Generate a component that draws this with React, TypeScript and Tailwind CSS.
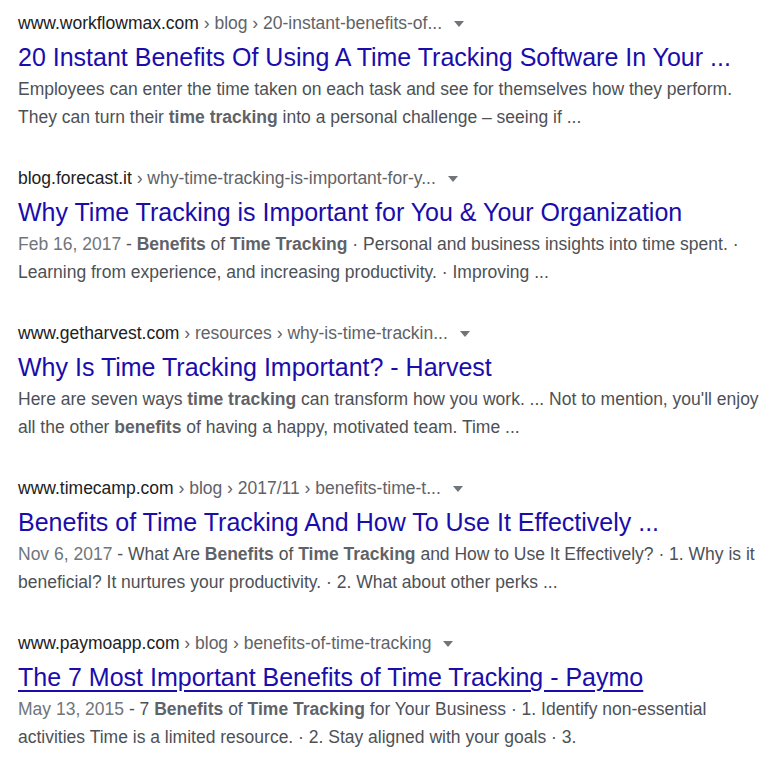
import React from "react";

type Part = string | { b: string };
type Result = {
  domain: string;
  crumbs: string;
  title: string;
  underline?: boolean;
  date?: string;
  lines: Part[][];
};

const results: Result[] = [
  {
    domain: "www.workflowmax.com",
    crumbs: " › blog › 20-instant-benefits-of...",
    title: "20 Instant Benefits Of Using A Time Tracking Software In Your ...",
    lines: [
      ["Employees can enter the time taken on each task and see for themselves how they perform."],
      ["They can turn their ", { b: "time tracking" }, " into a personal challenge – seeing if ..."],
    ],
  },
  {
    domain: "blog.forecast.it",
    crumbs: " › why-time-tracking-is-important-for-y...",
    title: "Why Time Tracking is Important for You & Your Organization",
    date: "Feb 16, 2017",
    lines: [
      [{ b: "Benefits" }, " of ", { b: "Time Tracking" }, " · Personal and business insights into time spent. ·"],
      ["Learning from experience, and increasing productivity. · Improving ..."],
    ],
  },
  {
    domain: "www.getharvest.com",
    crumbs: " › resources › why-is-time-trackin...",
    title: "Why Is Time Tracking Important? - Harvest",
    lines: [
      ["Here are seven ways ", { b: "time tracking" }, " can transform how you work. ... Not to mention, you'll enjoy"],
      ["all the other ", { b: "benefits" }, " of having a happy, motivated team. Time ..."],
    ],
  },
  {
    domain: "www.timecamp.com",
    crumbs: " › blog › 2017/11 › benefits-time-t...",
    title: "Benefits of Time Tracking And How To Use It Effectively ...",
    date: "Nov 6, 2017",
    lines: [
      ["What Are ", { b: "Benefits" }, " of ", { b: "Time Tracking" }, " and How to Use It Effectively? · 1. Why is it"],
      ["beneficial? It nurtures your productivity. · 2. What about other perks ..."],
    ],
  },
  {
    domain: "www.paymoapp.com",
    crumbs: " › blog › benefits-of-time-tracking",
    title: "The 7 Most Important Benefits of Time Tracking - Paymo",
    underline: true,
    date: "May 13, 2015",
    lines: [
      ["7 ", { b: "Benefits" }, " of ", { b: "Time Tracking" }, " for Your Business · 1. Identify non-essential"],
      ["activities Time is a limited resource. · 2. Stay aligned with your goals · 3."],
    ],
  },
];

function Caret() {
  return (
    <svg width="10" height="6" viewBox="0 0 10 6" className="ml-[12px] mt-[1px]">
      <path d="M0 0 L10 0 L5 6 Z" fill="#70757a" />
    </svg>
  );
}

export default function App() {
  return (
    <div
      className="w-[781px] h-[767px] bg-white pl-[18px] pt-[11px] overflow-hidden"
      style={{ fontFamily: '"Liberation Sans", Arial, sans-serif' }}
    >
      <div className="flex flex-col gap-[35px]">
        {results.map((r, i) => (
          <div key={i} className="flex flex-col">
            <div className="flex items-center h-[24px] text-[17.5px] leading-[24px] whitespace-pre">
              <span>
                <span className="text-[#202124]">{r.domain}</span>
                <span className="text-[#5f6368]">{r.crumbs}</span>
              </span>
              <Caret />
            </div>
            <div
              className={
                "mt-[6px] h-[32px] text-[25px] leading-[32px] text-[#1a0dab] whitespace-nowrap " +
                (r.underline ? "underline underline-offset-[4px] decoration-[1.5px]" : "")
              }
            >
              {r.title}
            </div>
            <div className="mt-[2px] text-[17.5px] leading-[28px] text-[#4d5156]">
              {r.lines.map((line, li) => (
                <div key={li} className="whitespace-nowrap">
                  {li === 0 && r.date ? (
                    <>
                      <span className="text-[#70757a]">{r.date}</span>
                      <span className="text-[#4d5156]"> - </span>
                    </>
                  ) : null}
                  {line.map((p, pi) =>
                    typeof p === "string" ? (
                      <span key={pi}>{p}</span>
                    ) : (
                      <b key={pi} className="font-bold text-[#5f6368]">
                        {p.b}
                      </b>
                    )
                  )}
                </div>
              ))}
            </div>
          </div>
        ))}
      </div>
    </div>
  );
}
